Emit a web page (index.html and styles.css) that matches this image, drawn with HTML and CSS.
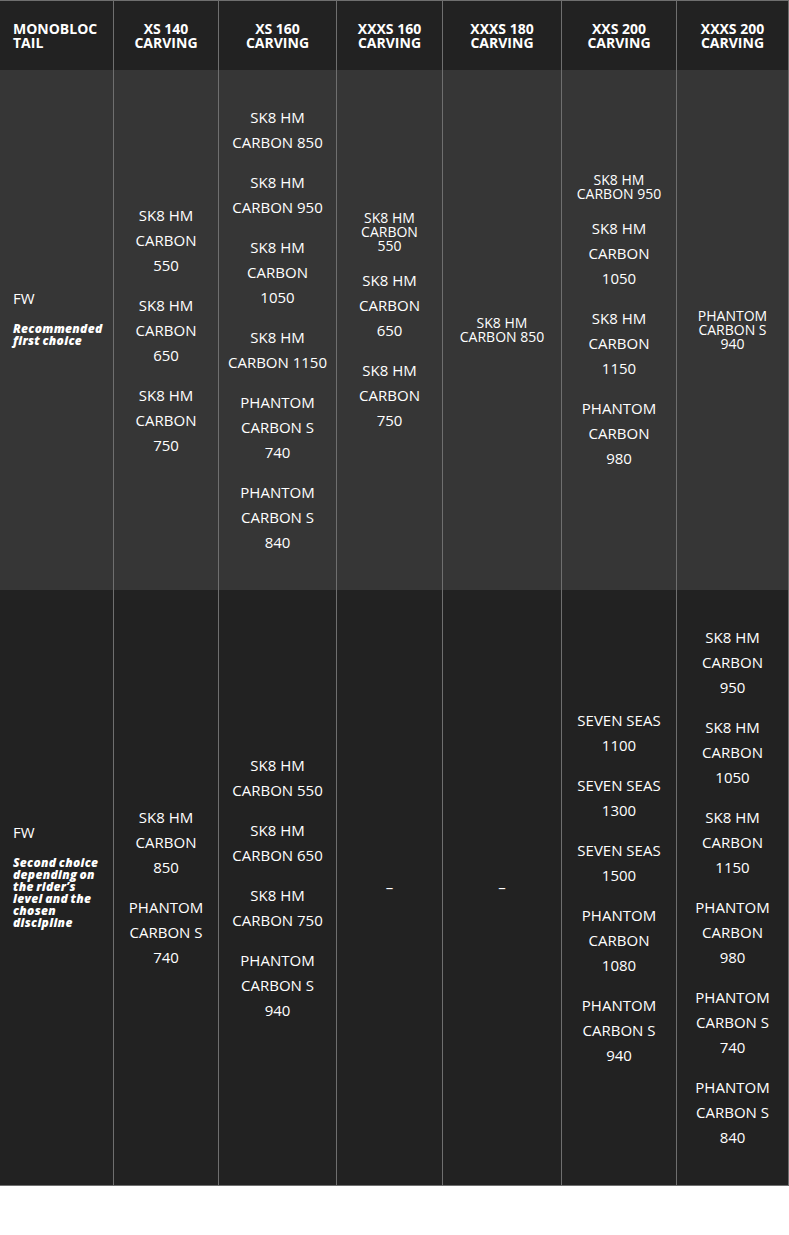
FILE: index.html
```html
<!DOCTYPE html>
<html lang="en">
<head>
<meta charset="utf-8">
<title>Monobloc tail compatibility</title>
<link rel="stylesheet" href="styles.css">
</head>
<body>
<table class="grid">
  <colgroup>
    <col class="w1"><col class="w2"><col class="w3"><col class="w4"><col class="w5"><col class="w6"><col class="w7">
  </colgroup>
  <thead>
    <tr>
      <th class="label">MONOBLOC<br>TAIL</th>
      <th>XS 140<br>CARVING</th>
      <th>XS 160<br>CARVING</th>
      <th>XXXS 160<br>CARVING</th>
      <th>XXXS 180<br>CARVING</th>
      <th>XXS 200<br>CARVING</th>
      <th>XXXS 200<br>CARVING</th>
    </tr>
  </thead>
  <tbody>
    <tr class="row-light">
      <td class="label"><p class="fw">FW</p><p class="note">Recommended<br>first choice</p></td>
      <td>
        <p>SK8 HM<br>CARBON<br>550</p>
        <p>SK8 HM<br>CARBON<br>650</p>
        <p>SK8 HM<br>CARBON<br>750</p>
      </td>
      <td>
        <p>SK8 HM<br>CARBON 850</p>
        <p>SK8 HM<br>CARBON 950</p>
        <p>SK8 HM<br>CARBON<br>1050</p>
        <p>SK8 HM<br>CARBON 1150</p>
        <p>PHANTOM<br>CARBON S<br>740</p>
        <p>PHANTOM<br>CARBON S<br>840</p>
      </td>
      <td class="trail">
        <p class="tight">SK8 HM<br>CARBON<br>550</p>
        <p>SK8 HM<br>CARBON<br>650</p>
        <p>SK8 HM<br>CARBON<br>750</p>
      </td>
      <td>
        <p class="tight">SK8 HM<br>CARBON 850</p>
      </td>
      <td class="trail">
        <p class="tight">SK8 HM<br>CARBON 950</p>
        <p>SK8 HM<br>CARBON<br>1050</p>
        <p>SK8 HM<br>CARBON<br>1150</p>
        <p>PHANTOM<br>CARBON<br>980</p>
      </td>
      <td>
        <p class="tight">PHANTOM<br>CARBON S<br>940</p>
      </td>
    </tr>
    <tr class="row-dark">
      <td class="label"><p class="fw">FW</p><p class="note">Second choice<br>depending on<br>the rider’s<br>level and the<br>chosen<br>discipline</p></td>
      <td>
        <p>SK8 HM<br>CARBON<br>850</p>
        <p>PHANTOM<br>CARBON S<br>740</p>
      </td>
      <td>
        <p>SK8 HM<br>CARBON 550</p>
        <p>SK8 HM<br>CARBON 650</p>
        <p>SK8 HM<br>CARBON 750</p>
        <p>PHANTOM<br>CARBON S<br>940</p>
      </td>
      <td><p>–</p></td>
      <td><p>–</p></td>
      <td>
        <p>SEVEN SEAS<br>1100</p>
        <p>SEVEN SEAS<br>1300</p>
        <p>SEVEN SEAS<br>1500</p>
        <p>PHANTOM<br>CARBON<br>1080</p>
        <p>PHANTOM<br>CARBON S<br>940</p>
      </td>
      <td>
        <p>SK8 HM<br>CARBON<br>950</p>
        <p>SK8 HM<br>CARBON<br>1050</p>
        <p>SK8 HM<br>CARBON<br>1150</p>
        <p>PHANTOM<br>CARBON<br>980</p>
        <p>PHANTOM<br>CARBON S<br>740</p>
        <p>PHANTOM<br>CARBON S<br>840</p>
      </td>
    </tr>
  </tbody>
</table>
</body>
</html>
```

FILE: styles.css
```css
html, body {
  margin: 0;
  padding: 0;
  background: #ffffff;
}

body {
  font-family: "Open Sans", "Liberation Sans", sans-serif;
  color: #ffffff;
}

.grid {
  width: 789px;
  table-layout: fixed;
  border-collapse: separate;
  border-spacing: 0;
  border-top: 1px solid #6f6f6f;
  border-bottom: 1px solid #6f6f6f;
}

.w1 { width: 113px; }
.w2 { width: 105px; }
.w3 { width: 118px; }
.w4 { width: 106px; }
.w5 { width: 119px; }
.w6 { width: 115px; }
.w7 { width: 113px; }

.grid th,
.grid td {
  box-sizing: border-box;
  border-left: 1px solid #6f6f6f;
  text-align: center;
  vertical-align: middle;
  white-space: nowrap;
}

.grid th:first-child,
.grid td:first-child {
  border-left: none;
}

.grid th:last-child,
.grid td:last-child {
  border-right: 1px solid #6f6f6f;
}

.grid thead th {
  background: #222222;
  padding: 21px 4px 20px;
  font-size: 14px;
  line-height: 14px;
  font-weight: 700;
}

.grid th.label,
.grid td.label {
  text-align: left;
  padding-left: 13px;
}

.row-light td {
  background: #363636;
}

.row-dark td {
  background: #222222;
}

.grid td {
  padding: 35px 4px;
  font-size: 15px;
  line-height: 25px;
}

.grid td p {
  margin: 0 0 15px;
}

.grid td p:last-child {
  margin-bottom: 0;
}

.grid td.trail p:last-child {
  margin-bottom: 16px;
}

.grid td p.tight {
  font-size: 14px;
  line-height: 14px;
}

.grid td p.fw {
  margin-bottom: 12px;
}

.grid td p.note,
.grid td p.note:last-child {
  margin-bottom: 27px;
  font-size: 12px;
  line-height: 12px;
  font-style: italic;
  font-weight: 800;
  letter-spacing: 0.3px;
  word-spacing: -1px;
}
```
